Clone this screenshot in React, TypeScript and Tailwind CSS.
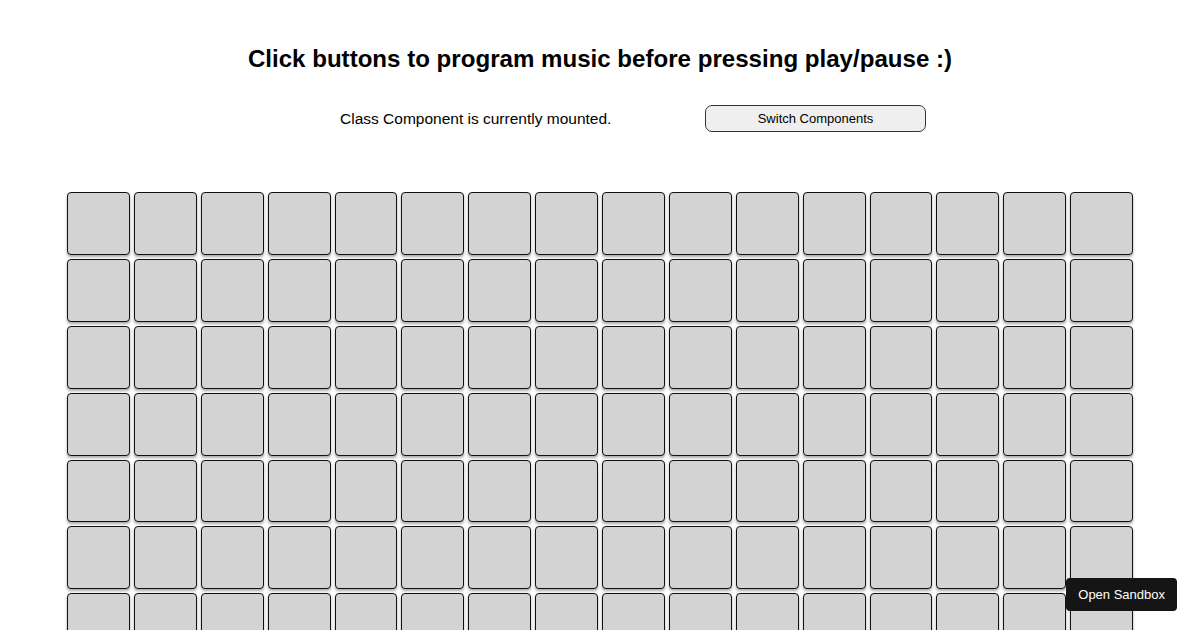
import React from 'react';

const ROWS = 7;
const COLS = 16;

export default function App() {
  const cells = Array.from({ length: ROWS * COLS });

  return (
    <div className="relative min-h-screen bg-white font-['Liberation_Sans',Arial,sans-serif] text-black overflow-hidden h-[630px]">
      <h1 className="pt-[44px] text-center text-[24.1px] font-bold leading-[30px]">
        Click buttons to program music before pressing play/pause :)
      </h1>

      <div className="mt-[31px] flex items-center pl-[340px]">
        <span className="w-[365px] text-[15.5px] leading-[20px]">Class Component is currently mounted.</span>
        <button className="h-[27px] w-[221px] rounded-[7px] border border-[#333] bg-[#efefef] text-[13px] leading-none">
          Switch Components
        </button>
      </div>

      <div className="mx-auto mt-[60px] grid w-[1066px] grid-cols-16 gap-[4px]">
        {cells.map((_, i) => (
          <div
            key={i}
            className="aspect-square rounded-[4px] border border-[#111] bg-[#d3d3d3] shadow-[0_2px_3px_rgba(0,0,0,0.35)]"
          />
        ))}
      </div>

      <div className="absolute right-[23px] bottom-[19px] rounded-[4px] bg-[#151515] px-[12px] py-[9px] text-[13px] leading-[15px] text-white">
        Open Sandbox
      </div>
    </div>
  );
}
